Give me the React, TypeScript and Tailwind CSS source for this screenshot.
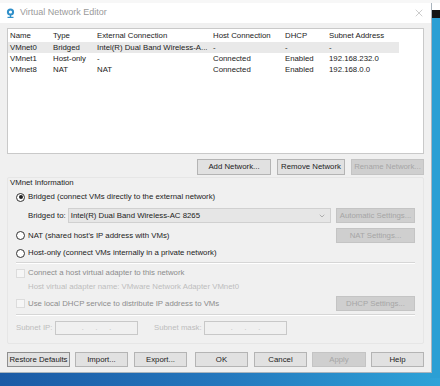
import { ChevronDown, X } from 'lucide-react';

const rows = [
    { name: 'VMnet0', type: 'Bridged', ext: 'Intel(R) Dual Band Wireless-A...', host: '-', dhcp: '-', subnet: '-', selected: true },
    { name: 'VMnet1', type: 'Host-only', ext: '-', host: 'Connected', dhcp: 'Enabled', subnet: '192.168.232.0', selected: false },
    { name: 'VMnet8', type: 'NAT', ext: 'NAT', host: 'Connected', dhcp: 'Enabled', subnet: '192.168.0.0', selected: false },
];

const cols = 'grid grid-cols-[43px_44px_116px_72px_44px_70px] items-center';

function Btn({ label, disabled, strong, w, h = 'h-[15px]' }: { label: string; disabled?: boolean; strong?: boolean; w: string; h?: string }) {
    return (
        <div
            className={`${w} ${h} flex items-center justify-center border text-[7.8px] leading-none whitespace-nowrap ${
                disabled
                    ? 'bg-[#cfcfcf] border-[#c4c4c4] text-[#a6a6a6]'
                    : strong
                    ? 'bg-[#e1e1e1] border-[#8f8f8f] text-[#222]'
                    : 'bg-[#e1e1e1] border-[#b4b4b4] text-[#222]'
            }`}
        >
            {label}
        </div>
    );
}

function Radio({ checked }: { checked?: boolean }) {
    return (
        <div className="w-[9px] h-[9px] rounded-full border border-[#333] bg-white flex items-center justify-center">
            {checked && <div className="w-[4px] h-[4px] rounded-full bg-[#222]" />}
        </div>
    );
}

function IpBox() {
    return (
        <div className="w-[83px] h-[14px] border border-[#c8c8c8] bg-[#f0f0f0] flex items-center justify-around px-[8px] text-[7px] text-[#bbb]">
            <span />
            <span>.</span>
            <span>.</span>
            <span>.</span>
            <span />
        </div>
    );
}

export default function App() {
    return (
        <div
            className="relative w-[440px] h-[386px] overflow-hidden bg-gradient-to-r from-[#1b5aa5] via-[#2477bd] to-[#2ea3d8] whitespace-nowrap"
            style={{ fontFamily: '"Liberation Sans", Arial, sans-serif' }}
        >
            {/* desktop bits behind the window */}
            <div className="absolute right-0 top-0 w-[10px] h-[10px] bg-white" />
            <div className="absolute right-0 top-[10px] w-[10px] h-[8px] bg-[#151515]" />
            <div className="absolute right-0 top-[18px] w-[10px] h-[360px] bg-[#2b9fd4]" />
            <div className="absolute left-0 top-0 w-[440px] h-[3px] bg-[#f7f7f7]" />

            {/* window */}
            <div className="absolute left-0 top-[3px] w-[432px] h-[370px] bg-[#f0f0f0] border-r border-b border-[#a9b4bd] flex flex-col">
                {/* title bar */}
                <div className="h-[20px] bg-white flex items-center pl-[6px] pr-[6px]">
                    <svg width="9" height="10" viewBox="0 0 9 10" className="mr-[5px]">
                        <circle cx="4.5" cy="4" r="3.6" fill="#2f8fc9" />
                        <circle cx="4.5" cy="4" r="1.6" fill="#ffffff" />
                        <rect x="3.8" y="7" width="1.4" height="2.2" fill="#2f8fc9" />
                        <rect x="1.5" y="8.8" width="6" height="1.2" fill="#2f8fc9" />
                    </svg>
                    <span className="text-[9px] text-[#9a9a9a]">Virtual Network Editor</span>
                    <div className="flex-1" />
                    <X className="w-[12px] h-[12px] text-[#9a9a9a]" strokeWidth={1} />
                </div>

                <div className="flex-1 flex flex-col px-[7px] pt-[5px] text-[7.8px]">
                    {/* network list */}
                    <div className="h-[126px] bg-white border border-[#c9c9c9] pt-[1px] text-[#222]">
                        <div className={`${cols} h-[11px] pl-[2px]`}>
                            <span>Name</span>
                            <span>Type</span>
                            <span>External Connection</span>
                            <span>Host Connection</span>
                            <span>DHCP</span>
                            <span>Subnet Address</span>
                        </div>
                        <div className="mt-[1px]">
                            {rows.map((r) => (
                                <div
                                    key={r.name}
                                    className={`${cols} w-[391px] h-[11px] pl-[2px] ${r.selected ? 'bg-[#e9e9e9]' : ''}`}
                                >
                                    <span>{r.name}</span>
                                    <span>{r.type}</span>
                                    <span>{r.ext}</span>
                                    <span>{r.host}</span>
                                    <span>{r.dhcp}</span>
                                    <span>{r.subnet}</span>
                                </div>
                            ))}
                        </div>
                    </div>

                    {/* list buttons */}
                    <div className="flex justify-end gap-[6px] mt-[5px]">
                        <Btn label="Add Network..." w="w-[74px]" h="h-[16px]" />
                        <Btn label="Remove Network" w="w-[68px]" h="h-[16px]" />
                        <Btn label="Rename Network..." w="w-[73px]" h="h-[16px]" disabled />
                    </div>

                    {/* VMnet information */}
                    <div className="mt-[2px] h-[167px] border border-[#e6e6e6] rounded-[2px] px-[8px] text-[#222]">
                        <div className="h-[10px] -ml-[6px] flex items-center">VMnet Information</div>
                        <div className="flex items-center gap-[3px] h-[12px] mt-[3px]">
                            <Radio checked />
                            <span>Bridged (connect VMs directly to the external network)</span>
                        </div>
                        <div className="flex items-center h-[15px] mt-[5px] pl-[12px]">
                            <span className="w-[40px]">Bridged to:</span>
                            <div className="w-[264px] h-[15px] border border-[#d0d0d0] bg-[#e6e6e6] flex items-center pl-[2px] pr-[4px]">
                                <span className="flex-1">Intel(R) Dual Band Wireless-AC 8265</span>
                                <ChevronDown className="w-[8px] h-[8px] text-[#777]" strokeWidth={1.5} />
                            </div>
                            <div className="ml-[5px]">
                                <Btn label="Automatic Settings..." w="w-[79px]" disabled />
                            </div>
                        </div>
                        <div className="flex items-center justify-between h-[15px] mt-[5px]">
                            <div className="flex items-center gap-[3px]">
                                <Radio />
                                <span>NAT (shared host's IP address with VMs)</span>
                            </div>
                            <Btn label="NAT Settings..." w="w-[79px]" disabled />
                        </div>
                        <div className="flex items-center gap-[3px] h-[12px] mt-[4px]">
                            <Radio />
                            <span>Host-only (connect VMs internally in a private network)</span>
                        </div>
                        <div className="h-[2px] bg-[#d6d6d6] mt-[3px] border-b border-white" />

                        <div className="flex items-center gap-[3px] h-[12px] mt-[3px] text-[#8c8c8c]">
                            <div className="w-[9px] h-[9px] border border-[#dcdcdc] bg-[#f6f6f6]" />
                            <span>Connect a host virtual adapter to this network</span>
                        </div>
                        <div className="h-[12px] mt-[2px] pl-[12px] flex items-center text-[#bdbdbd]">
                            Host virtual adapter name: VMware Network Adapter VMnet0
                        </div>
                        <div className="flex items-center justify-between h-[15px] mt-[3px]">
                            <div className="flex items-center gap-[3px] text-[#8c8c8c]">
                                <div className="w-[9px] h-[9px] border border-[#dcdcdc] bg-[#f6f6f6]" />
                                <span>Use local DHCP service to distribute IP address to VMs</span>
                            </div>
                            <Btn label="DHCP Settings..." w="w-[79px]" disabled />
                        </div>
                        <div className="h-[2px] bg-[#d6d6d6] mt-[3px] border-b border-white" />

                        <div className="flex items-center h-[14px] mt-[5px] text-[#bdbdbd]">
                            <span className="w-[39px]">Subnet IP:</span>
                            <IpBox />
                            <span className="w-[50px] ml-[16px]">Subnet mask:</span>
                            <IpBox />
                        </div>
                    </div>

                    {/* footer buttons */}
                    <div className="flex items-center mt-[8px]">
                        <Btn label="Restore Defaults" w="w-[63px]" strong />
                        <div className="ml-[5px]"><Btn label="Import..." w="w-[53px]" /></div>
                        <div className="ml-[6px]"><Btn label="Export..." w="w-[53px]" /></div>
                        <div className="ml-[8px]"><Btn label="OK" w="w-[53px]" /></div>
                        <div className="ml-[6px]"><Btn label="Cancel" w="w-[53px]" /></div>
                        <div className="ml-[5px]"><Btn label="Apply" w="w-[54px]" disabled /></div>
                        <div className="ml-[5px]"><Btn label="Help" w="w-[53px]" /></div>
                    </div>
                </div>
            </div>
        </div>
    );
}
